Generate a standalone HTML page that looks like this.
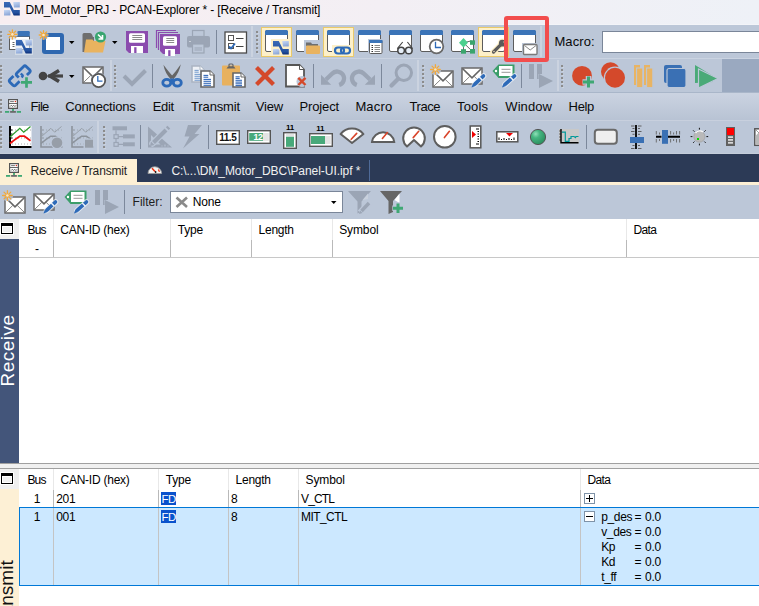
<!DOCTYPE html>
<html><head><meta charset="utf-8">
<style>
*{margin:0;padding:0;box-sizing:border-box}
html,body{width:759px;height:606px;overflow:hidden;background:#fff;font-family:"Liberation Sans",sans-serif;font-size:12px;color:#000}
.a{position:absolute}
svg{position:absolute;overflow:visible}
.t{position:absolute;white-space:pre;line-height:1}
</style></head><body>
<div class="a" style="left:0px;top:0px;width:759px;height:25px;background:linear-gradient(90deg,#f8eef1 0%,#f3eff4 50%,#eef1f7 100%);"></div>
<div class="a" style="left:0px;top:24px;width:759px;height:1px;background:#f3f4f8;"></div>
<div class="a" style="left:0px;top:25px;width:759px;height:67px;background:#bcc7d8;"></div>
<div class="a" style="left:0px;top:58px;width:759px;height:1px;background:#cad3e1;"></div>
<div class="a" style="left:722px;top:59px;width:37px;height:33px;background:#9aa9c0;"></div>
<div class="a" style="left:0px;top:92px;width:759px;height:1px;background:#a9b6c9;"></div>
<div class="a" style="left:0px;top:93px;width:759px;height:27px;background:linear-gradient(180deg,#cbd3e1,#b8c3d4);"></div>
<div class="a" style="left:0px;top:120px;width:759px;height:1px;background:#c8d0de;"></div>
<div class="a" style="left:0px;top:121px;width:759px;height:32px;background:#bcc7d8;"></div>
<div class="a" style="left:0px;top:153px;width:759px;height:1px;background:#c4cdda;"></div>
<div class="a" style="left:0px;top:154px;width:759px;height:28px;background:#2c3a56;"></div>
<div class="a" style="left:0px;top:159px;width:137px;height:26px;background:#fdf0d5;"></div>
<div class="a" style="left:0px;top:182px;width:759px;height:3px;background:#fdf0d5;"></div>
<div class="a" style="left:369px;top:160px;width:1px;height:21px;background:#4f6a98;"></div>
<div class="a" style="left:0px;top:185px;width:759px;height:34px;background:#bcc7d8;"></div>
<div class="a" style="left:0px;top:219px;width:19px;height:20px;background:#efefef;"></div>
<div class="a" style="left:0px;top:239px;width:19px;height:224px;background:#43557a;"></div>
<div class="a" style="left:19px;top:257px;width:740px;height:1px;background:#c8c8c8;"></div>
<div class="a" style="left:53px;top:219px;width:1px;height:21px;background:#e8e8e8;"></div>
<div class="a" style="left:53px;top:240px;width:1px;height:17px;background:#b9b9b9;"></div>
<div class="a" style="left:170px;top:219px;width:1px;height:21px;background:#e8e8e8;"></div>
<div class="a" style="left:170px;top:240px;width:1px;height:17px;background:#b9b9b9;"></div>
<div class="a" style="left:251px;top:219px;width:1px;height:21px;background:#e8e8e8;"></div>
<div class="a" style="left:251px;top:240px;width:1px;height:17px;background:#b9b9b9;"></div>
<div class="a" style="left:332px;top:219px;width:1px;height:21px;background:#e8e8e8;"></div>
<div class="a" style="left:332px;top:240px;width:1px;height:17px;background:#b9b9b9;"></div>
<div class="a" style="left:626px;top:219px;width:1px;height:21px;background:#e8e8e8;"></div>
<div class="a" style="left:626px;top:240px;width:1px;height:17px;background:#b9b9b9;"></div>
<div class="a" style="left:0px;top:463px;width:759px;height:1px;background:#a0a0a0;"></div>
<div class="a" style="left:0px;top:464px;width:759px;height:4px;background:#f0f0f0;"></div>
<div class="a" style="left:0px;top:468px;width:759px;height:1px;background:#a0a0a0;"></div>
<div class="a" style="left:0px;top:469px;width:19px;height:20px;background:#efefef;"></div>
<div class="a" style="left:0px;top:489px;width:19px;height:117px;background:#fdf0d5;"></div>
<div class="a" style="left:19px;top:507px;width:740px;height:79px;background:#cce8ff;border-top:1px solid #0078d7;border-bottom:1px solid #0078d7;border-left:1px solid #0078d7"></div>
<div class="a" style="left:53px;top:469px;width:1px;height:21px;background:#e8e8e8;"></div>
<div class="a" style="left:53px;top:490px;width:1px;height:17px;background:#b9b9b9;"></div>
<div class="a" style="left:53px;top:508px;width:1px;height:77px;background:#c4c4c4;"></div>
<div class="a" style="left:158px;top:469px;width:1px;height:21px;background:#e8e8e8;"></div>
<div class="a" style="left:158px;top:490px;width:1px;height:17px;background:#b9b9b9;"></div>
<div class="a" style="left:158px;top:508px;width:1px;height:77px;background:#c4c4c4;"></div>
<div class="a" style="left:228px;top:469px;width:1px;height:21px;background:#e8e8e8;"></div>
<div class="a" style="left:228px;top:490px;width:1px;height:17px;background:#b9b9b9;"></div>
<div class="a" style="left:228px;top:508px;width:1px;height:77px;background:#c4c4c4;"></div>
<div class="a" style="left:298px;top:469px;width:1px;height:21px;background:#e8e8e8;"></div>
<div class="a" style="left:298px;top:490px;width:1px;height:17px;background:#b9b9b9;"></div>
<div class="a" style="left:298px;top:508px;width:1px;height:77px;background:#c4c4c4;"></div>
<div class="a" style="left:580px;top:469px;width:1px;height:21px;background:#e8e8e8;"></div>
<div class="a" style="left:580px;top:490px;width:1px;height:17px;background:#b9b9b9;"></div>
<div class="a" style="left:580px;top:508px;width:1px;height:77px;background:#c4c4c4;"></div>
<div class="a" style="left:161px;top:492px;width:15px;height:13px;background:#0a52cc;"></div>
<div class="a" style="left:161px;top:510px;width:15px;height:13px;background:#0a52cc;"></div>
<div class="a" style="left:1px;top:223px;width:12px;height:11px;border:1px solid #000;border-top-width:3px;background:#efefef;box-shadow:0 0 0 1px #fff, inset 0 0 0 1px #fff"></div>
<div class="a" style="left:1px;top:473px;width:12px;height:11px;border:1px solid #000;border-top-width:3px;background:#efefef;box-shadow:0 0 0 1px #fff, inset 0 0 0 1px #fff"></div>
<div class="a" style="left:584px;top:493px;width:11px;height:11px;border:1px solid #7f93a8;background:#fff"></div>
<div class="a" style="left:586px;top:498px;width:7px;height:1px;background:#000;"></div>
<div class="a" style="left:589px;top:495px;width:1px;height:7px;background:#000;"></div>
<div class="a" style="left:584px;top:511px;width:11px;height:11px;border:1px solid #7f93a8;background:#fff"></div>
<div class="a" style="left:586px;top:516px;width:7px;height:1px;background:#000;"></div>
<div class="t" style="left:-29.5px;top:341px;width:72px;height:19px;font-size:19px;letter-spacing:0.5px;color:#fff;transform:rotate(-90deg);text-align:center">Receive</div>
<div class="t" style="left:-31px;top:587px;width:74px;height:19px;font-size:19px;color:#111;transform:rotate(-90deg)">Transmit</div>
<svg style="left:4px;top:2px" width="16.0" height="13.6" viewBox="0 0 16 13.6"><defs><linearGradient id="lb" x1="0" y1="0" x2="0.3" y2="1"><stop offset="0" stop-color="#c9daf6"/><stop offset="1" stop-color="#8ea8d8"/></linearGradient><linearGradient id="db" x1="0" y1="0" x2="0" y2="1"><stop offset="0" stop-color="#3a6ab6"/><stop offset="0.8" stop-color="#22509e"/><stop offset="1" stop-color="#0c2f7a"/></linearGradient></defs><path d="M9.2 0H15.8V5.4H10Z" fill="url(#lb)"/><path d="M0 8H5.6L6.4 9.6V13.4H0Z" fill="url(#lb)"/><path d="M0 0H5.8L9.8 8H15.8V13.4H9.7L5.8 5.4H0Z" fill="url(#db)"/></svg>
<div class="a" style="left:0px;top:31px;width:2px;height:2px;background:#8c8c8c;"></div>
<div class="a" style="left:1px;top:33px;width:2px;height:1px;background:#d6dbe3;opacity:.6"></div>
<div class="a" style="left:0px;top:35px;width:2px;height:2px;background:#8c8c8c;"></div>
<div class="a" style="left:1px;top:37px;width:2px;height:1px;background:#d6dbe3;opacity:.6"></div>
<div class="a" style="left:0px;top:39px;width:2px;height:2px;background:#8c8c8c;"></div>
<div class="a" style="left:1px;top:41px;width:2px;height:1px;background:#d6dbe3;opacity:.6"></div>
<div class="a" style="left:0px;top:43px;width:2px;height:2px;background:#8c8c8c;"></div>
<div class="a" style="left:1px;top:45px;width:2px;height:1px;background:#d6dbe3;opacity:.6"></div>
<div class="a" style="left:0px;top:47px;width:2px;height:2px;background:#8c8c8c;"></div>
<div class="a" style="left:1px;top:49px;width:2px;height:1px;background:#d6dbe3;opacity:.6"></div>
<div class="a" style="left:0px;top:51px;width:2px;height:2px;background:#8c8c8c;"></div>
<div class="a" style="left:1px;top:53px;width:2px;height:1px;background:#d6dbe3;opacity:.6"></div>
<svg style="left:5px;top:27px" width="30" height="30" viewBox="0 0 30 30"><rect x="4.5" y="9.5" width="20" height="13" fill="#fff" stroke="#5c5c5c" stroke-width="1"/><path d="M12.4 9.5V5.2Q12.4 4 13.6 4H23.6Q24.8 4 24.8 5.2V9.5Z" fill="#3b74b8"/><path d="M7.5 15.5h2M7.5 17.5h2M7.5 19.5h2" stroke="#666" stroke-width="1"/><rect x="10" y="12" width="18" height="16" fill="#bcc7d8" opacity="0"/></svg>
<div class="a" style="left:15px;top:39px;width:18px;height:16px;background:#dfe6ef;opacity:.6"></div>
<svg style="left:16px;top:40px" width="16.0" height="13.6" viewBox="0 0 16 13.6"><defs><linearGradient id="lb" x1="0" y1="0" x2="0.3" y2="1"><stop offset="0" stop-color="#c9daf6"/><stop offset="1" stop-color="#8ea8d8"/></linearGradient><linearGradient id="db" x1="0" y1="0" x2="0" y2="1"><stop offset="0" stop-color="#3a6ab6"/><stop offset="0.8" stop-color="#22509e"/><stop offset="1" stop-color="#0c2f7a"/></linearGradient></defs><path d="M9.2 0H15.8V5.4H10Z" fill="url(#lb)"/><path d="M0 8H5.6L6.4 9.6V13.4H0Z" fill="url(#lb)"/><path d="M0 0H5.8L9.8 8H15.8V13.4H9.7L5.8 5.4H0Z" fill="url(#db)"/></svg>
<svg style="left:5px;top:27px" width="16" height="16"><circle cx="7.4" cy="7.4" r="5.3999999999999995" fill="#bcc7d8" opacity=".55"/><path d="M2.80 7.40L12.00 7.40M4.15 4.15L10.65 10.65M7.40 2.80L7.40 12.00M10.65 4.15L4.15 10.65" stroke="#f2a93b" stroke-width="1.3" stroke-linecap="round"/><circle cx="7.4" cy="7.4" r="1.3" fill="#f4e6cc"/></svg>
<svg style="left:42px;top:33px" width="22" height="21" viewBox="0 0 22 21"><rect x="2" y="2" width="18" height="17" fill="#fff" stroke="#2f68b0" stroke-width="4" rx="1"/></svg>
<svg style="left:37px;top:29px" width="14" height="14"><circle cx="6.5" cy="6" r="5.1" fill="#bcc7d8" opacity=".55"/><path d="M2.20 6.00L10.80 6.00M3.46 2.96L9.54 9.04M6.50 1.70L6.50 10.30M9.54 2.96L3.46 9.04" stroke="#f2a93b" stroke-width="1.3" stroke-linecap="round"/><circle cx="6.5" cy="6" r="1.3" fill="#f4e6cc"/></svg>
<svg style="left:69px;top:41px" width="6" height="3" viewBox="0 0 6 3"><path d="M0 0H5.5L2.75 3Z" fill="#000"/></svg>
<svg style="left:81px;top:31px" width="26" height="23" viewBox="0 0 26 23"><path d="M1.5 3.5Q1.5 2 3 2H9Q10.5 2 11 3.5L12 6H13V21H1.5Z" fill="#6e6e6e"/><path d="M3 21.5L5 8.5H11.5L12.8 10H24.5L22 21.5Z" fill="#e9b35f"/><circle cx="19.5" cy="6" r="5.6" fill="#39a56f"/><path d="M17 3.5L21 7.5M21.5 4V8H17.5" stroke="#fff" stroke-width="1.6" fill="none"/></svg>
<svg style="left:112px;top:41px" width="6" height="3" viewBox="0 0 6 3"><path d="M0 0H5.5L2.75 3Z" fill="#000"/></svg>
<svg style="left:126px;top:31px" width="22" height="22" viewBox="0 0 22 22"><path d="M0 0H22V22H3L0 19Z" fill="#8b4cae"/><rect x="3" y="2.3" width="16" height="9.5" rx="1.5" fill="#fff"/><path d="M6.3 4.5H16.2M6.3 6.5H16.2M6.3 8.5H16.2" stroke="#8a8a8a" stroke-width="1"/><rect x="5" y="15" width="12" height="7" fill="#fff"/><rect x="8.2" y="16.2" width="2.3" height="5.8" fill="#8b4cae"/></svg>
<svg style="left:155px;top:29px" width="25" height="25" viewBox="0 0 25 25"><path d="M1.5 19V1.5H21M3.5 21V3.5H23" fill="none" stroke="#8b4cae" stroke-width="1.2"/></svg>
<svg style="left:160px;top:34px" width="20" height="20" viewBox="0 0 20 20"><path d="M0 0H20V20H3L0 17Z" fill="#8b4cae"/><rect x="3" y="2.3" width="14" height="9.5" rx="1.5" fill="#fff"/><path d="M6.3 4.5H14.2M6.3 6.5H14.2M6.3 8.5H14.2" stroke="#8a8a8a" stroke-width="1"/><rect x="5" y="15" width="10" height="7" fill="#fff"/><rect x="8.2" y="16.2" width="2.3" height="5.8" fill="#8b4cae"/></svg>
<svg style="left:186px;top:30px" width="25" height="24" viewBox="0 0 25 24"><rect x="6.5" y="0.5" width="11.5" height="6" fill="none" stroke="#9ba5b5" stroke-width="1.2"/><rect x="1" y="6" width="23" height="11.5" rx="2" fill="#9ba5b5"/><rect x="6.5" y="14" width="11.5" height="9" fill="#bcc7d8" stroke="#9ba5b5" stroke-width="1.2"/><path d="M8.5 18H16M8.5 20H16" stroke="#9ba5b5" stroke-width="1"/><rect x="3" y="11" width="2" height="1" fill="#c9d0da"/></svg>
<div class="a" style="left:216px;top:30px;width:1px;height:24px;background:#7c889b;"></div>
<svg style="left:224px;top:31px" width="24" height="23" viewBox="0 0 24 23"><rect x="1" y="1" width="21.5" height="21" fill="#fff" stroke="#4a4a4a" stroke-width="1.3"/><rect x="4.5" y="4.5" width="5" height="5" fill="none" stroke="#555" stroke-width="1"/><rect x="4.5" y="12.5" width="5" height="5" fill="none" stroke="#555" stroke-width="1"/><path d="M12 7.5H19.5M12 15.5H19.5" stroke="#444" stroke-width="1.1"/><path d="M5 15.5L7 17.5L11 12.5" stroke="#2d6ab8" stroke-width="1.8" fill="none"/></svg>
<div class="a" style="left:251px;top:26px;width:2px;height:31px;background:#cbd3e0;"></div>
<div class="a" style="left:256px;top:31px;width:2px;height:2px;background:#8c8c8c;"></div>
<div class="a" style="left:257px;top:33px;width:2px;height:1px;background:#d6dbe3;opacity:.6"></div>
<div class="a" style="left:256px;top:35px;width:2px;height:2px;background:#8c8c8c;"></div>
<div class="a" style="left:257px;top:37px;width:2px;height:1px;background:#d6dbe3;opacity:.6"></div>
<div class="a" style="left:256px;top:39px;width:2px;height:2px;background:#8c8c8c;"></div>
<div class="a" style="left:257px;top:41px;width:2px;height:1px;background:#d6dbe3;opacity:.6"></div>
<div class="a" style="left:256px;top:43px;width:2px;height:2px;background:#8c8c8c;"></div>
<div class="a" style="left:257px;top:45px;width:2px;height:1px;background:#d6dbe3;opacity:.6"></div>
<div class="a" style="left:256px;top:47px;width:2px;height:2px;background:#8c8c8c;"></div>
<div class="a" style="left:257px;top:49px;width:2px;height:1px;background:#d6dbe3;opacity:.6"></div>
<div class="a" style="left:256px;top:51px;width:2px;height:2px;background:#8c8c8c;"></div>
<div class="a" style="left:257px;top:53px;width:2px;height:1px;background:#d6dbe3;opacity:.6"></div>
<div class="a" style="left:261px;top:27px;width:31px;height:30px;background:#fdf0c9;border:1px solid #e9c96a"></div>
<div class="a" style="left:323px;top:27px;width:31px;height:30px;background:#fdf0c9;border:1px solid #e9c96a"></div>
<div class="a" style="left:478px;top:27px;width:31px;height:30px;background:#fdf0c9;border:1px solid #e9c96a"></div>
<svg style="left:264px;top:29px" width="25" height="24" viewBox="0 0 25 24"><rect x="1.5" y="1.5" width="22" height="21" rx="1.5" fill="#fff" stroke="#5c5c5c" stroke-width="1"/><path d="M1 6 V2.5 Q1 1 2.5 1 H22.5 Q24 1 24 2.5 V6 Z" fill="#3b74b8"/></svg>
<div class="a" style="left:271px;top:39px;width:19px;height:15px;background:#fdf0c9;"></div>
<svg style="left:273px;top:40.5px" width="16.0" height="13.6" viewBox="0 0 16 13.6"><defs><linearGradient id="lb" x1="0" y1="0" x2="0.3" y2="1"><stop offset="0" stop-color="#c9daf6"/><stop offset="1" stop-color="#8ea8d8"/></linearGradient><linearGradient id="db" x1="0" y1="0" x2="0" y2="1"><stop offset="0" stop-color="#3a6ab6"/><stop offset="0.8" stop-color="#22509e"/><stop offset="1" stop-color="#0c2f7a"/></linearGradient></defs><path d="M9.2 0H15.8V5.4H10Z" fill="url(#lb)"/><path d="M0 8H5.6L6.4 9.6V13.4H0Z" fill="url(#lb)"/><path d="M0 0H5.8L9.8 8H15.8V13.4H9.7L5.8 5.4H0Z" fill="url(#db)"/></svg>
<svg style="left:295px;top:29px" width="25" height="24" viewBox="0 0 25 24"><rect x="1.5" y="1.5" width="22" height="21" rx="1.5" fill="#fff" stroke="#5c5c5c" stroke-width="1"/><path d="M1 6 V2.5 Q1 1 2.5 1 H22.5 Q24 1 24 2.5 V6 Z" fill="#3b74b8"/></svg>
<svg style="left:304px;top:40px" width="17" height="14" viewBox="0 0 17 14"><rect x="0" y="0" width="17" height="14" fill="#bcc7d8"/><path d="M2 2.5H7L8 4H14V6H2Z" fill="#6e6e6e"/><rect x="2" y="5.5" width="14" height="8.5" rx="1" fill="#e9b35f"/></svg>
<svg style="left:326px;top:29px" width="25" height="24" viewBox="0 0 25 24"><rect x="1.5" y="1.5" width="22" height="21" rx="1.5" fill="#fff" stroke="#5c5c5c" stroke-width="1"/><path d="M1 6 V2.5 Q1 1 2.5 1 H22.5 Q24 1 24 2.5 V6 Z" fill="#3b74b8"/></svg>
<svg style="left:332px;top:45px" width="21" height="10" viewBox="0 0 21 10"><rect x="0" y="0" width="21" height="10" fill="#fdf0c9"/><rect x="3" y="2.5" width="9" height="6" rx="3" fill="none" stroke="#2d6ab8" stroke-width="2.2"/><rect x="9" y="2.5" width="9" height="6" rx="3" fill="none" stroke="#2d6ab8" stroke-width="2.2"/></svg>
<svg style="left:357px;top:29px" width="25" height="24" viewBox="0 0 25 24"><rect x="1.5" y="1.5" width="22" height="21" rx="1.5" fill="#fff" stroke="#5c5c5c" stroke-width="1"/><path d="M1 6 V2.5 Q1 1 2.5 1 H22.5 Q24 1 24 2.5 V6 Z" fill="#3b74b8"/></svg>
<svg style="left:368px;top:39px" width="15" height="16" viewBox="0 0 15 16"><rect x="0" y="0" width="15" height="16" fill="#bcc7d8"/><rect x="1.5" y="1.5" width="12.5" height="13" rx="1" fill="#fff" stroke="#5c5c5c" stroke-width="1"/><rect x="1" y="1" width="13.5" height="3" fill="#3b74b8"/><path d="M3.5 6.5h1.5M3.5 8.5h1.5M3.5 10.5h1.5M3.5 12.5h1.5" stroke="#333" stroke-width="1"/><path d="M6.5 6.5h5.5M6.5 8.5h5.5M6.5 10.5h5.5M6.5 12.5h5.5" stroke="#888" stroke-width="1"/></svg>
<svg style="left:388px;top:29px" width="25" height="24" viewBox="0 0 25 24"><rect x="1.5" y="1.5" width="22" height="21" rx="1.5" fill="#fff" stroke="#5c5c5c" stroke-width="1"/><path d="M1 6 V2.5 Q1 1 2.5 1 H22.5 Q24 1 24 2.5 V6 Z" fill="#3b74b8"/></svg>
<svg style="left:394px;top:40px" width="20" height="16" viewBox="0 0 20 16"><path d="M8.7 2L3.3 8.6M13.4 2L18.6 8.6" stroke="#444" stroke-width="1.1" fill="none"/><circle cx="7.1" cy="10.5" r="3.3" fill="#e6eef8" stroke="#444" stroke-width="1.5"/><circle cx="14.8" cy="10.5" r="3.3" fill="#e6eef8" stroke="#444" stroke-width="1.5"/><path d="M10.3 10.2H11.6" stroke="#444" stroke-width="1.4"/></svg>
<svg style="left:419px;top:29px" width="25" height="24" viewBox="0 0 25 24"><rect x="1.5" y="1.5" width="22" height="21" rx="1.5" fill="#fff" stroke="#5c5c5c" stroke-width="1"/><path d="M1 6 V2.5 Q1 1 2.5 1 H22.5 Q24 1 24 2.5 V6 Z" fill="#3b74b8"/></svg>
<svg style="left:428px;top:38px" width="17" height="17" viewBox="0 0 17 17"><circle cx="8.5" cy="8.5" r="6.8" fill="#fff" stroke="#6a6a6a" stroke-width="1.8"/><path d="M7.5 3.8V9.5H13" stroke="#2d6ab8" stroke-width="1.3" fill="none"/></svg>
<svg style="left:450px;top:29px" width="25" height="24" viewBox="0 0 25 24"><rect x="1.5" y="1.5" width="22" height="21" rx="1.5" fill="#fff" stroke="#5c5c5c" stroke-width="1"/><path d="M1 6 V2.5 Q1 1 2.5 1 H22.5 Q24 1 24 2.5 V6 Z" fill="#3b74b8"/></svg>
<svg style="left:457px;top:36px" width="20" height="19" viewBox="0 0 20 19"><rect x="4" y="3" width="16" height="16" fill="#bcc7d8" opacity="0"/><path d="M6.5 6.8L14.5 4.8M6.5 6.8L15 15M6.5 6.8L6.5 15" stroke="#555" stroke-width="0.9"/><path d="M6.5 2L11 6.8L6.5 11.5L2 6.8Z" fill="#4bd08e"/><rect x="13" y="4.3" width="5" height="4.5" fill="#3aa56d"/><rect x="4" y="13.2" width="5" height="4.5" fill="#3aa56d"/><rect x="13" y="13" width="5" height="4.6" fill="#3aa56d"/></svg>
<svg style="left:481px;top:29px" width="25" height="24" viewBox="0 0 25 24"><rect x="1.5" y="1.5" width="22" height="21" rx="1.5" fill="#fff" stroke="#5c5c5c" stroke-width="1"/><path d="M1 6 V2.5 Q1 1 2.5 1 H22.5 Q24 1 24 2.5 V6 Z" fill="#3b74b8"/></svg>
<svg style="left:489px;top:38px" width="18" height="17" viewBox="0 0 18 17"><path d="M4 14.5L12 6.5" stroke="#fdf0c9" stroke-width="6" stroke-linecap="round"/><circle cx="13.5" cy="5" r="4.6" fill="#fdf0c9"/><path d="M4.5 14L11.8 6.7" stroke="#5a5a5a" stroke-width="3.2" stroke-linecap="round"/><circle cx="13.3" cy="5.2" r="3.4" fill="#5a5a5a"/><path d="M13.8 4.6L16.5 1.5L18 3.5Z" fill="#fdf0c9"/><circle cx="5" cy="13.5" r=".7" fill="#fdf0c9"/></svg>
<svg style="left:512px;top:29px" width="25" height="24" viewBox="0 0 25 24"><rect x="1.5" y="1.5" width="22" height="21" rx="1.5" fill="#fff" stroke="#5c5c5c" stroke-width="1"/><path d="M1 6 V2.5 Q1 1 2.5 1 H22.5 Q24 1 24 2.5 V6 Z" fill="#3b74b8"/></svg>
<svg style="left:522px;top:43px" width="16" height="12" viewBox="0 0 16 12"><rect x="0" y="0" width="16" height="12" fill="#bcc7d8"/><rect x="1.5" y="1.5" width="13.5" height="10" rx="1" fill="#fff" stroke="#7a7a7a" stroke-width="1.4"/><path d="M2.5 2.5L8.2 7L14 2.5" fill="none" stroke="#888" stroke-width="1"/></svg>
<div class="a" style="left:540px;top:26px;width:2px;height:31px;background:#cbd3e0;"></div>
<div class="a" style="left:0px;top:65px;width:2px;height:2px;background:#8c8c8c;"></div>
<div class="a" style="left:1px;top:67px;width:2px;height:1px;background:#d6dbe3;opacity:.6"></div>
<div class="a" style="left:0px;top:69px;width:2px;height:2px;background:#8c8c8c;"></div>
<div class="a" style="left:1px;top:71px;width:2px;height:1px;background:#d6dbe3;opacity:.6"></div>
<div class="a" style="left:0px;top:73px;width:2px;height:2px;background:#8c8c8c;"></div>
<div class="a" style="left:1px;top:75px;width:2px;height:1px;background:#d6dbe3;opacity:.6"></div>
<div class="a" style="left:0px;top:77px;width:2px;height:2px;background:#8c8c8c;"></div>
<div class="a" style="left:1px;top:79px;width:2px;height:1px;background:#d6dbe3;opacity:.6"></div>
<div class="a" style="left:0px;top:81px;width:2px;height:2px;background:#8c8c8c;"></div>
<div class="a" style="left:1px;top:83px;width:2px;height:1px;background:#d6dbe3;opacity:.6"></div>
<div class="a" style="left:0px;top:85px;width:2px;height:2px;background:#8c8c8c;"></div>
<div class="a" style="left:1px;top:87px;width:2px;height:1px;background:#d6dbe3;opacity:.6"></div>
<svg style="left:5px;top:62px" width="30" height="28" viewBox="0 0 30 28"><path d="M13.8 15.6L11.9 13.7Q10.6 12.4 11.9 11.1L18.6 4.4Q19.9 3.1 21.2 4.4L24.6 7.8Q25.9 9.1 24.6 10.4L21.9 13.1" fill="none" stroke="#2d6ab8" stroke-width="2.8"/><path d="M15.8 11.5L17.4 13.1Q18.1 13.8 17.4 14.5L16.6 15.5" fill="none" stroke="#2d6ab8" stroke-width="2.4"/><path d="M8.5 14L4.9 17.6Q3.6 18.9 4.9 20.2L8 23.3Q9.3 24.6 10.6 23.3L14.6 19.3" fill="none" stroke="#2d6ab8" stroke-width="2.8"/><path d="M21.5 15.3V25.7M16 20.4H27" stroke="#bcc7d8" stroke-width="4.6"/><path d="M21.5 15.3V25.7M16 20.4H27" stroke="#3fa874" stroke-width="2.7"/></svg>
<svg style="left:38px;top:69px" width="26" height="15" viewBox="0 0 26 15"><circle cx="5" cy="7" r="4.3" fill="#444"/><path d="M21 1.5L12 7L21 12.5" fill="none" stroke="#444" stroke-width="3.6"/><path d="M10 7H25" stroke="#444" stroke-width="3.2"/></svg>
<svg style="left:69px;top:75px" width="6" height="3" viewBox="0 0 6 3"><path d="M0 0H5.5L2.75 3Z" fill="#000"/></svg>
<svg style="left:82px;top:66px" width="22" height="18" viewBox="0 0 22 18"><rect x="1" y="1" width="20" height="16" fill="#fff" stroke="#6a6a6a" stroke-width="1.5"/><path d="M1.5 1.5L11.0 10.799999999999999L20.5 1.5" fill="none" stroke="#666" stroke-width="1.6"/><path d="M2 16L8.8 9.36M20 16L13.2 9.36" stroke="#777" stroke-width="0.9"/></svg>
<svg style="left:90px;top:72px" width="17" height="17" viewBox="0 0 17 17"><circle cx="8.6" cy="8.5" r="7.8" fill="#bcc7d8"/><circle cx="8.6" cy="8.5" r="6.6" fill="#fff" stroke="#555" stroke-width="1.8"/><path d="M7.8 4V9.2H12.5" stroke="#2d6ab8" stroke-width="1.3" fill="none"/></svg>
<div class="a" style="left:110px;top:60px;width:2px;height:31px;background:#cbd3e0;"></div>
<div class="a" style="left:114px;top:65px;width:2px;height:2px;background:#8c8c8c;"></div>
<div class="a" style="left:115px;top:67px;width:2px;height:1px;background:#d6dbe3;opacity:.6"></div>
<div class="a" style="left:114px;top:69px;width:2px;height:2px;background:#8c8c8c;"></div>
<div class="a" style="left:115px;top:71px;width:2px;height:1px;background:#d6dbe3;opacity:.6"></div>
<div class="a" style="left:114px;top:73px;width:2px;height:2px;background:#8c8c8c;"></div>
<div class="a" style="left:115px;top:75px;width:2px;height:1px;background:#d6dbe3;opacity:.6"></div>
<div class="a" style="left:114px;top:77px;width:2px;height:2px;background:#8c8c8c;"></div>
<div class="a" style="left:115px;top:79px;width:2px;height:1px;background:#d6dbe3;opacity:.6"></div>
<div class="a" style="left:114px;top:81px;width:2px;height:2px;background:#8c8c8c;"></div>
<div class="a" style="left:115px;top:83px;width:2px;height:1px;background:#d6dbe3;opacity:.6"></div>
<div class="a" style="left:114px;top:85px;width:2px;height:2px;background:#8c8c8c;"></div>
<div class="a" style="left:115px;top:87px;width:2px;height:1px;background:#d6dbe3;opacity:.6"></div>
<svg style="left:122px;top:68px" width="25" height="18" viewBox="0 0 25 18"><path d="M2 8L10 16L23.5 2.5" fill="none" stroke="#9ba5b5" stroke-width="4"/></svg>
<div class="a" style="left:152px;top:64px;width:1px;height:24px;background:#7c889b;"></div>
<svg style="left:160px;top:63px" width="24" height="25" viewBox="0 0 24 25"><path d="M3.4 1.8Q5 10.5 10.8 16.2L13.6 14.2Q7.5 7.5 3.4 1.8Z" fill="#666"/><path d="M20.8 1.2Q19.2 10 13.4 16.2L10.6 14.2Q16.7 7.5 20.8 1.2Z" fill="#666"/><ellipse cx="6.8" cy="19.7" rx="4" ry="3.4" fill="none" stroke="#2d6ab8" stroke-width="2.8"/><ellipse cx="17.3" cy="19.7" rx="4" ry="3.4" fill="none" stroke="#2d6ab8" stroke-width="2.8"/><path d="M10.2 15.5H14L13.2 21H11Z" fill="#2d6ab8"/></svg>
<svg style="left:191px;top:65px" width="14" height="18" viewBox="0 0 14 18"><path d="M1 1H9L13 5V17H1Z" fill="#eef1f6" stroke="#aab4c2" stroke-width="1.6"/><path d="M9 1V5H13" fill="#fff" stroke="#aab4c2" stroke-width="1"/><path d="M3.5 5.4H7.7" stroke="#7aa0d0" stroke-width="1.1"/><path d="M3.5 7.2H7.7" stroke="#7aa0d0" stroke-width="1.1"/><path d="M3.5 9.4H10.0" stroke="#7aa0d0" stroke-width="1.1"/><path d="M3.5 11.3H10.0" stroke="#7aa0d0" stroke-width="1.1"/><path d="M3.5 13.3H10.0" stroke="#7aa0d0" stroke-width="1.1"/><path d="M3.5 15.3H10.0" stroke="#7aa0d0" stroke-width="1.1"/></svg>
<svg style="left:200px;top:70px" width="15" height="18" viewBox="0 0 15 18"><path d="M1 1H10L14 5V17H1Z" fill="#fff" stroke="#666" stroke-width="1.6"/><path d="M10 1V5H14" fill="#fff" stroke="#666" stroke-width="1"/><path d="M3.5 5.4H8.2" stroke="#3469b8" stroke-width="1.1"/><path d="M3.5 7.2H8.2" stroke="#3469b8" stroke-width="1.1"/><path d="M3.5 9.4H11.0" stroke="#3469b8" stroke-width="1.1"/><path d="M3.5 11.3H11.0" stroke="#3469b8" stroke-width="1.1"/><path d="M3.5 13.3H11.0" stroke="#3469b8" stroke-width="1.1"/><path d="M3.5 15.3H11.0" stroke="#3469b8" stroke-width="1.1"/></svg>
<svg style="left:221px;top:64px" width="20" height="22" viewBox="0 0 20 22"><rect x="1" y="1.5" width="18" height="20" rx="1" fill="#e8b15e"/><path d="M5.5 4.5H14.5L13 2.5H7Z" fill="#666"/><rect x="8" y="0" width="4" height="3" rx="1" fill="none" stroke="#666" stroke-width="1.2"/></svg>
<svg style="left:232px;top:72px" width="14" height="16" viewBox="0 0 14 16"><path d="M1 1H9L13 5V15H1Z" fill="#fff" stroke="#666" stroke-width="1.6"/><path d="M9 1V5H13" fill="#fff" stroke="#666" stroke-width="1"/><path d="M3.5 4.8H7.7" stroke="#3469b8" stroke-width="1.1"/><path d="M3.5 6.4H7.7" stroke="#3469b8" stroke-width="1.1"/><path d="M3.5 8.3H10.0" stroke="#3469b8" stroke-width="1.1"/><path d="M3.5 10.1H10.0" stroke="#3469b8" stroke-width="1.1"/><path d="M3.5 11.8H10.0" stroke="#3469b8" stroke-width="1.1"/><path d="M3.5 13.6H10.0" stroke="#3469b8" stroke-width="1.1"/></svg>
<svg style="left:254px;top:65px" width="22" height="22" viewBox="0 0 22 22"><path d="M2.5 2.5L19.5 19.5M19.5 2.5L2.5 19.5" stroke="#d4492b" stroke-width="4.2"/></svg>
<svg style="left:284px;top:63px" width="24" height="25" viewBox="0 0 24 25"><path d="M2 2H15.5L20 6.5V23.5H2Z" fill="#fff" stroke="#555" stroke-width="1.8"/><path d="M15.5 2V6.5H20" fill="#fff" stroke="#555" stroke-width="1"/><circle cx="18" cy="18.5" r="5.5" fill="#bcc7d8"/><path d="M14.3 14.8L21.5 22M21.5 14.8L14.3 22" stroke="#d4492b" stroke-width="2.4"/></svg>
<div class="a" style="left:313px;top:64px;width:1px;height:24px;background:#7c889b;"></div>
<svg style="left:318px;top:64px" width="30" height="26" viewBox="0 0 30 26"><path d="M8 15.5L14 9.8A6.9 6.9 0 1 1 21.2 21" fill="none" stroke="#9ba5b5" stroke-width="4.3"/><path d="M3 10.7V20.8H13.2Z" fill="#9ba5b5"/></svg>
<svg style="left:349px;top:64px" width="30" height="26" viewBox="0 0 30 26"><path d="M21 15.5L15 9.8A6.9 6.9 0 1 0 7.8 21" fill="none" stroke="#9ba5b5" stroke-width="4.3"/><path d="M26 10.7V20.8H15.8Z" fill="#9ba5b5"/></svg>
<div class="a" style="left:381px;top:64px;width:1px;height:24px;background:#7c889b;"></div>
<svg style="left:388px;top:63px" width="26" height="26" viewBox="0 0 26 26"><circle cx="15.8" cy="9.8" r="7.7" fill="none" stroke="#9ba5b5" stroke-width="3"/><path d="M10 16L3.5 22.5" stroke="#9ba5b5" stroke-width="4.2" stroke-linecap="round"/></svg>
<div class="a" style="left:417px;top:60px;width:2px;height:31px;background:#cbd3e0;"></div>
<div class="a" style="left:422px;top:65px;width:2px;height:2px;background:#8c8c8c;"></div>
<div class="a" style="left:423px;top:67px;width:2px;height:1px;background:#d6dbe3;opacity:.6"></div>
<div class="a" style="left:422px;top:69px;width:2px;height:2px;background:#8c8c8c;"></div>
<div class="a" style="left:423px;top:71px;width:2px;height:1px;background:#d6dbe3;opacity:.6"></div>
<div class="a" style="left:422px;top:73px;width:2px;height:2px;background:#8c8c8c;"></div>
<div class="a" style="left:423px;top:75px;width:2px;height:1px;background:#d6dbe3;opacity:.6"></div>
<div class="a" style="left:422px;top:77px;width:2px;height:2px;background:#8c8c8c;"></div>
<div class="a" style="left:423px;top:79px;width:2px;height:1px;background:#d6dbe3;opacity:.6"></div>
<div class="a" style="left:422px;top:81px;width:2px;height:2px;background:#8c8c8c;"></div>
<div class="a" style="left:423px;top:83px;width:2px;height:1px;background:#d6dbe3;opacity:.6"></div>
<div class="a" style="left:422px;top:85px;width:2px;height:2px;background:#8c8c8c;"></div>
<div class="a" style="left:423px;top:87px;width:2px;height:1px;background:#d6dbe3;opacity:.6"></div>
<svg style="left:432px;top:70px" width="22" height="18" viewBox="0 0 22 18"><rect x="1" y="1" width="20" height="16" fill="#fff" stroke="#6a6a6a" stroke-width="1.5"/><path d="M1.5 1.5L11.0 10.799999999999999L20.5 1.5" fill="none" stroke="#666" stroke-width="1.6"/><path d="M2 16L8.8 9.36M20 16L13.2 9.36" stroke="#777" stroke-width="0.9"/></svg>
<svg style="left:428px;top:63px" width="16" height="16"><circle cx="7.4" cy="6.5" r="5.8" fill="#bcc7d8" opacity=".6"/><circle cx="7.4" cy="6.5" r="5.6" fill="#bcc7d8" opacity=".55"/><path d="M2.60 6.50L12.20 6.50M4.01 3.11L10.79 9.89M7.40 1.70L7.40 11.30M10.79 3.11L4.01 9.89" stroke="#f2a93b" stroke-width="1.3" stroke-linecap="round"/><circle cx="7.4" cy="6.5" r="1.3" fill="#f4e6cc"/></svg>
<svg style="left:461px;top:67px" width="22" height="18" viewBox="0 0 22 18"><rect x="1" y="1" width="20" height="16" fill="#fff" stroke="#6a6a6a" stroke-width="1.5"/><path d="M1.5 1.5L11.0 10.799999999999999L20.5 1.5" fill="none" stroke="#666" stroke-width="1.6"/><path d="M2 16L8.8 9.36M20 16L13.2 9.36" stroke="#777" stroke-width="0.9"/></svg>
<svg style="left:469px;top:73px" width="18" height="16" viewBox="0 0 18 16"><line x1="5.5" y1="11.5" x2="14.5" y2="3" stroke="#eef2f8" stroke-width="5.6" stroke-linecap="round" opacity=".75"/><path d="M2.5 14.5L4.0 10.3L6.7 13.0Z" fill="#2d6ab8"/><line x1="6.1" y1="10.9" x2="14.5" y2="3" stroke="#2d6ab8" stroke-width="3.6" stroke-linecap="round"/><line x1="11.3" y1="6.2" x2="12.3" y2="5.2" stroke="#eef2f8" stroke-width="4.5"/></svg>
<svg style="left:492px;top:63.5px" width="23" height="15" viewBox="0 0 23 15"><path d="M0.5 7L6.5 0.5H22.5V14H6.5Z" fill="#3c9e6a"/><rect x="7" y="2" width="13.5" height="10" fill="#fff"/><circle cx="4" cy="7" r="1.2" fill="#fff"/><path d="M9.5 5.3H18.5M9.5 8.3H18.5" stroke="#999" stroke-width="1"/></svg>
<svg style="left:499px;top:72px" width="18" height="17" viewBox="0 0 18 17"><circle cx="9" cy="8" r="0" /><line x1="6" y1="12.5" x2="15.5" y2="4" stroke="#eef2f8" stroke-width="5.6" stroke-linecap="round" opacity=".75"/><path d="M3 15.5L4.5 11.3L7.2 14.0Z" fill="#2d6ab8"/><line x1="6.6" y1="11.9" x2="15.5" y2="4" stroke="#2d6ab8" stroke-width="3.6" stroke-linecap="round"/><line x1="12.3" y1="7.2" x2="13.3" y2="6.2" stroke="#eef2f8" stroke-width="4.5"/></svg>
<div class="a" style="left:521px;top:64px;width:1px;height:24px;background:#7c889b;"></div>
<svg style="left:529px;top:64px" width="25" height="25" viewBox="0 0 25 25"><rect x="0" y="0" width="5" height="15" fill="#9ba5b5"/><rect x="8" y="0" width="5" height="15" fill="#9ba5b5"/><path d="M9.5 10H13V10.5L24 17.5L10 24Z" fill="#bcc7d8"/><path d="M10 10L24 17L10 24Z" fill="#9ba5b5"/></svg>
<div class="a" style="left:557px;top:60px;width:2px;height:31px;background:#cbd3e0;"></div>
<div class="a" style="left:561px;top:65px;width:2px;height:2px;background:#8c8c8c;"></div>
<div class="a" style="left:562px;top:67px;width:2px;height:1px;background:#d6dbe3;opacity:.6"></div>
<div class="a" style="left:561px;top:69px;width:2px;height:2px;background:#8c8c8c;"></div>
<div class="a" style="left:562px;top:71px;width:2px;height:1px;background:#d6dbe3;opacity:.6"></div>
<div class="a" style="left:561px;top:73px;width:2px;height:2px;background:#8c8c8c;"></div>
<div class="a" style="left:562px;top:75px;width:2px;height:1px;background:#d6dbe3;opacity:.6"></div>
<div class="a" style="left:561px;top:77px;width:2px;height:2px;background:#8c8c8c;"></div>
<div class="a" style="left:562px;top:79px;width:2px;height:1px;background:#d6dbe3;opacity:.6"></div>
<div class="a" style="left:561px;top:81px;width:2px;height:2px;background:#8c8c8c;"></div>
<div class="a" style="left:562px;top:83px;width:2px;height:1px;background:#d6dbe3;opacity:.6"></div>
<div class="a" style="left:561px;top:85px;width:2px;height:2px;background:#8c8c8c;"></div>
<div class="a" style="left:562px;top:87px;width:2px;height:1px;background:#d6dbe3;opacity:.6"></div>
<svg style="left:571px;top:65px" width="26" height="24" viewBox="0 0 26 24"><circle cx="11" cy="10.8" r="9.9" fill="#d4492b"/><path d="M17.5 11V23M11.5 17H23.5" stroke="#bcc7d8" stroke-width="5.5"/><path d="M17.5 11.5V22.5M12 17H23" stroke="#3fa874" stroke-width="3"/></svg>
<svg style="left:600px;top:62px" width="26" height="27" viewBox="0 0 26 27"><circle cx="10.5" cy="9.8" r="9.5" fill="#d4492b"/><circle cx="15" cy="15.8" r="11.2" fill="#bcc7d8"/><circle cx="15" cy="15.8" r="10" fill="#d4492b"/></svg>
<svg style="left:633px;top:64px" width="22" height="25" viewBox="0 0 22 25"><rect x="1" y="1" width="6" height="20" fill="#e8b464"/><rect x="11" y="1" width="6" height="20" fill="#e8b464"/><rect x="3.6" y="4" width="6.2" height="19.6" fill="#e8b464" stroke="#bcc7d8" stroke-width="1"/><rect x="13.6" y="4" width="6.2" height="19.6" fill="#e8b464" stroke="#bcc7d8" stroke-width="1"/></svg>
<svg style="left:663px;top:64px" width="24" height="24" viewBox="0 0 24 24"><rect x="1" y="1" width="18" height="18" rx="2" fill="#3a70b4"/><rect x="4" y="4.5" width="19" height="19" rx="2" fill="#3a70b4" stroke="#bcc7d8" stroke-width="1.2"/></svg>
<svg style="left:694px;top:64px" width="25" height="25" viewBox="0 0 25 25"><path d="M1 1L19 12V18L1 19Z" fill="#4aaa78"/><path d="M4.5 5L24 14.5L4.5 24Z" fill="#4aaa78" stroke="#bcc7d8" stroke-width="1.2"/></svg>
<div class="a" style="left:0px;top:99px;width:2px;height:2px;background:#8c8c8c;"></div>
<div class="a" style="left:1px;top:101px;width:2px;height:1px;background:#d6dbe3;opacity:.6"></div>
<div class="a" style="left:0px;top:103px;width:2px;height:2px;background:#8c8c8c;"></div>
<div class="a" style="left:1px;top:105px;width:2px;height:1px;background:#d6dbe3;opacity:.6"></div>
<div class="a" style="left:0px;top:107px;width:2px;height:2px;background:#8c8c8c;"></div>
<div class="a" style="left:1px;top:109px;width:2px;height:1px;background:#d6dbe3;opacity:.6"></div>
<div class="a" style="left:0px;top:111px;width:2px;height:2px;background:#8c8c8c;"></div>
<div class="a" style="left:1px;top:113px;width:2px;height:1px;background:#d6dbe3;opacity:.6"></div>
<svg style="left:5px;top:98px" width="17" height="15" viewBox="0 0 17 15"><rect x="3" y="1" width="10" height="10" fill="#555"/><rect x="4.2" y="2.2" width="7.6" height="2.8" fill="#fff"/><rect x="4.2" y="5.9" width="7.6" height="3.8" fill="#fff"/><path d="M5.1 3.6H8.9" stroke="#666" stroke-width="0.9"/><circle cx="10.4" cy="3.6" r="0.75" fill="#e03020"/><path d="M5.1 8.6L6.3 7.2L7.5 8.6L8.7 7.2L9.9 8.6L11.1 7.2" stroke="#555" stroke-width="0.8" fill="none"/><rect x="7.1" y="11" width="1.8" height="2" fill="#3fa874"/><rect x="0" y="13" width="4.2" height="1.8" fill="#3fa874"/><rect x="5.1" y="13" width="5.8" height="1.8" fill="#6a6a6a"/><rect x="11.8" y="13" width="4.2" height="1.8" fill="#3fa874"/></svg>
<svg style="left:6px;top:162px" width="17" height="15" viewBox="0 0 17 15"><rect x="3" y="1" width="10" height="10" fill="#555"/><rect x="4.2" y="2.2" width="7.6" height="2.8" fill="#fff"/><rect x="4.2" y="5.9" width="7.6" height="3.8" fill="#fff"/><path d="M5.1 3.6H8.9" stroke="#666" stroke-width="0.9"/><circle cx="10.4" cy="3.6" r="0.75" fill="#e03020"/><path d="M5.1 8.6L6.3 7.2L7.5 8.6L8.7 7.2L9.9 8.6L11.1 7.2" stroke="#555" stroke-width="0.8" fill="none"/><rect x="7.1" y="11" width="1.8" height="2" fill="#3fa874"/><rect x="0" y="13" width="4.2" height="1.8" fill="#3fa874"/><rect x="5.1" y="13" width="5.8" height="1.8" fill="#6a6a6a"/><rect x="11.8" y="13" width="4.2" height="1.8" fill="#3fa874"/></svg>
<div class="a" style="left:0px;top:126px;width:2px;height:2px;background:#8c8c8c;"></div>
<div class="a" style="left:1px;top:128px;width:2px;height:1px;background:#d6dbe3;opacity:.6"></div>
<div class="a" style="left:0px;top:130px;width:2px;height:2px;background:#8c8c8c;"></div>
<div class="a" style="left:1px;top:132px;width:2px;height:1px;background:#d6dbe3;opacity:.6"></div>
<div class="a" style="left:0px;top:134px;width:2px;height:2px;background:#8c8c8c;"></div>
<div class="a" style="left:1px;top:136px;width:2px;height:1px;background:#d6dbe3;opacity:.6"></div>
<div class="a" style="left:0px;top:138px;width:2px;height:2px;background:#8c8c8c;"></div>
<div class="a" style="left:1px;top:140px;width:2px;height:1px;background:#d6dbe3;opacity:.6"></div>
<div class="a" style="left:0px;top:142px;width:2px;height:2px;background:#8c8c8c;"></div>
<div class="a" style="left:1px;top:144px;width:2px;height:1px;background:#d6dbe3;opacity:.6"></div>
<div class="a" style="left:0px;top:146px;width:2px;height:2px;background:#8c8c8c;"></div>
<div class="a" style="left:1px;top:148px;width:2px;height:1px;background:#d6dbe3;opacity:.6"></div>
<svg style="left:9px;top:126px" width="23" height="22" viewBox="0 0 23 22"><rect x="0" y="0" width="22.5" height="22" fill="#fff"/><path d="M1 0V21H22.5" fill="none" stroke="#000" stroke-width="2"/><path d="M2 4h1.5M2 8h1.5M2 12h1.5M2 16h1.5" stroke="#000" stroke-width="1"/><path d="M3 4H22M3 12H22M3 18H22" stroke="#999" stroke-width="0.8" stroke-dasharray="1 2"/><path d="M1 11L10.8 2.3L14.7 6.2L21.5 0.5" fill="none" stroke="#2a9a2a" stroke-width="1.2"/><path d="M1 17.5Q5 14 10.8 10.2H15.4L21.5 14.7" fill="none" stroke="#f01010" stroke-width="1.7"/></svg>
<svg style="left:40px;top:126px" width="23" height="22" viewBox="0 0 23 22"><path d="M1 0V21H22.5" fill="none" stroke="#8c939c" stroke-width="1.6"/><path d="M2 4h1.5M2 8h1.5M2 12h1.5M2 16h1.5" stroke="#8c939c" stroke-width="1"/><path d="M3 4H22M3 12H22M3 18H22" stroke="#9aa1aa" stroke-width="0.8" stroke-dasharray="1 2"/><path d="M1 11L10.8 2.3L14.7 6.2L21.5 0.5" fill="none" stroke="#98a0a9" stroke-width="1"/><path d="M1 17.5Q5 14 10.8 10.2H15.4L21.5 14.7" fill="none" stroke="#8c939c" stroke-width="1.5"/><circle cx="17" cy="16.8" r="6.3" fill="#bcc7d8"/><circle cx="17" cy="16.8" r="5.3" fill="#979ea8"/></svg>
<svg style="left:71px;top:126px" width="23" height="22" viewBox="0 0 23 22"><path d="M1 0V21H22.5" fill="none" stroke="#8c939c" stroke-width="1.6"/><path d="M2 4h1.5M2 8h1.5M2 12h1.5M2 16h1.5" stroke="#8c939c" stroke-width="1"/><path d="M3 4H22M3 12H22M3 18H22" stroke="#9aa1aa" stroke-width="0.8" stroke-dasharray="1 2"/><path d="M1 11L10.8 2.3L14.7 6.2L21.5 0.5" fill="none" stroke="#98a0a9" stroke-width="1"/><path d="M1 17.5Q5 14 10.8 10.2H15.4L21.5 14.7" fill="none" stroke="#8c939c" stroke-width="1.5"/><rect x="12.5" y="12.5" width="10" height="10" fill="#bcc7d8"/><rect x="14" y="13.7" width="8" height="8" fill="#979ea8"/></svg>
<div class="a" style="left:97px;top:121px;width:2px;height:32px;background:#cbd3e0;"></div>
<div class="a" style="left:103px;top:126px;width:2px;height:2px;background:#8c8c8c;"></div>
<div class="a" style="left:104px;top:128px;width:2px;height:1px;background:#d6dbe3;opacity:.6"></div>
<div class="a" style="left:103px;top:130px;width:2px;height:2px;background:#8c8c8c;"></div>
<div class="a" style="left:104px;top:132px;width:2px;height:1px;background:#d6dbe3;opacity:.6"></div>
<div class="a" style="left:103px;top:134px;width:2px;height:2px;background:#8c8c8c;"></div>
<div class="a" style="left:104px;top:136px;width:2px;height:1px;background:#d6dbe3;opacity:.6"></div>
<div class="a" style="left:103px;top:138px;width:2px;height:2px;background:#8c8c8c;"></div>
<div class="a" style="left:104px;top:140px;width:2px;height:1px;background:#d6dbe3;opacity:.6"></div>
<div class="a" style="left:103px;top:142px;width:2px;height:2px;background:#8c8c8c;"></div>
<div class="a" style="left:104px;top:144px;width:2px;height:1px;background:#d6dbe3;opacity:.6"></div>
<div class="a" style="left:103px;top:146px;width:2px;height:2px;background:#8c8c8c;"></div>
<div class="a" style="left:104px;top:148px;width:2px;height:1px;background:#d6dbe3;opacity:.6"></div>
<svg style="left:111px;top:125px" width="25" height="23" viewBox="0 0 25 23"><rect x="1.5" y="1.3" width="14.5" height="4" fill="#9ba5b5"/><path d="M5 5.3V19" stroke="#9ba5b5" stroke-width="1.2"/><rect x="3" y="9.7" width="4.2" height="3.8" fill="#bcc7d8" stroke="#9ba5b5" stroke-width="1.2"/><rect x="3" y="17.5" width="4.2" height="3.8" fill="#bcc7d8" stroke="#9ba5b5" stroke-width="1.2"/><path d="M7 11.6H12M7 19.4H12" stroke="#9ba5b5" stroke-width="1.2"/><rect x="12" y="9.4" width="11.8" height="4" fill="#9ba5b5"/><rect x="12" y="17.3" width="11.8" height="4" fill="#9ba5b5"/></svg>
<div class="a" style="left:140px;top:125px;width:1px;height:24px;background:#7c889b;"></div>
<svg style="left:147px;top:124px" width="26" height="25" viewBox="0 0 26 25"><path d="M1 2.5V23.5H25Z" fill="#9ba5b5"/><path d="M4 20.5V11L13.5 20.5Z" fill="#bcc7d8"/><path d="M5.5 19.5L20.5 4.5" stroke="#bcc7d8" stroke-width="6.5" stroke-linecap="round"/><path d="M6.5 18.5L19 6" stroke="#9ba5b5" stroke-width="4"/><path d="M20.3 4.7L21.8 3.2" stroke="#9ba5b5" stroke-width="4"/><path d="M3 22L4 17.5L7.5 21Z" fill="#9ba5b5"/><path d="M15 21.5V22.5M18 20.5V22.5M21 21.5V22.5" stroke="#bcc7d8" stroke-width="1"/></svg>
<svg style="left:180px;top:125px" width="23" height="24" viewBox="0 0 23 24"><path d="M8 0H22L14.5 9H19.5L3 23.5L9.5 11.5H4.5Z" fill="#9ba5b5"/></svg>
<div class="a" style="left:208px;top:125px;width:1px;height:24px;background:#7c889b;"></div>
<svg style="left:216px;top:130px" width="24" height="15" viewBox="0 0 24 15"><rect x="0.7" y="0.7" width="22.6" height="13.6" fill="#fff" stroke="#555" stroke-width="1.4"/></svg>
<div class="t" style="left:219.3px;top:132.7px;font-size:10px;letter-spacing:-0.5px;color:#111;font-weight:bold">11.5</div>
<svg style="left:247px;top:130px" width="24" height="14" viewBox="0 0 24 14"><rect x="0.7" y="0.7" width="22.6" height="12.6" fill="#fff" stroke="#555" stroke-width="1.4"/><rect x="2.2" y="3" width="14" height="7.8" fill="#48a97a"/><rect x="16.2" y="3" width="5.6" height="7.8" fill="#e3e3e3"/></svg>
<div class="t" style="left:253.6px;top:132.8px;font-size:9px;letter-spacing:-0.6px;color:#fff;font-weight:bold">12</div>
<svg style="left:283px;top:132px" width="14" height="17" viewBox="0 0 14 17"><rect x="0.7" y="0.7" width="12.6" height="15.6" fill="#fff" stroke="#555" stroke-width="1.4"/><rect x="3" y="2" width="8" height="2.8" fill="#e3e3e3"/><rect x="3" y="4.8" width="8" height="10" fill="#48a97a"/></svg>
<div class="t" style="left:286px;top:124.1px;font-size:8px;letter-spacing:-0.3px;color:#000;font-weight:bold">11</div>
<svg style="left:309px;top:133px" width="24" height="14" viewBox="0 0 24 14"><rect x="0.7" y="0.7" width="22.6" height="12.6" fill="#fff" stroke="#555" stroke-width="1.4"/><rect x="2" y="3" width="14" height="8" fill="#48a97a"/><rect x="16" y="3" width="5.8" height="8" fill="#e3e3e3"/></svg>
<div class="t" style="left:316.3px;top:125.2px;font-size:8px;letter-spacing:-0.3px;color:#000;font-weight:bold">11</div>
<svg style="left:338px;top:124px" width="28" height="24" viewBox="0 0 28 24"><path d="M14 19L2.57 10.07A14.5 14.5 0 0 1 25.43 10.07Z" fill="#fff" stroke="#5e5e5e" stroke-width="2" stroke-linejoin="round"/><path d="M13.2 15.3L18.7 9.4" stroke="#d9442a" stroke-width="1.6" stroke-linecap="round"/></svg>
<svg style="left:369px;top:124px" width="28" height="22" viewBox="0 0 28 22"><path d="M3 18A11.2 11.2 0 0 1 25.2 18Z" fill="#fff" stroke="#5e5e5e" stroke-width="2"/><path d="M13.4 14.4L18.4 8.5" stroke="#d9442a" stroke-width="1.6" stroke-linecap="round"/></svg>
<svg style="left:400px;top:123px" width="28" height="26" viewBox="0 0 28 26"><path d="M7 23.5A10.8 10.8 0 1 1 21 23.5L14 17Z" fill="#fff" stroke="#5e5e5e" stroke-width="2" stroke-linejoin="round"/><path d="M13.2 14.6L18.7 8.3" stroke="#d9442a" stroke-width="1.6" stroke-linecap="round"/></svg>
<svg style="left:431px;top:123px" width="28" height="27" viewBox="0 0 28 27"><circle cx="13.8" cy="13.8" r="10.8" fill="#fff" stroke="#5e5e5e" stroke-width="2"/><path d="M13.4 14.6L18.4 8.3" stroke="#d9442a" stroke-width="1.6" stroke-linecap="round"/></svg>
<svg style="left:469px;top:125px" width="13" height="24" viewBox="0 0 13 24"><rect x="1.2" y="1" width="10.6" height="21.8" fill="#fff" stroke="#555" stroke-width="1.5"/><path d="M3 6V13L7 9.5Z" fill="#f00000"/><path d="M7 4H10M8.5 6.5H10M8.5 9H10M8.5 11.5H10M8.5 14H10M8.5 16.5H10M7 19H10" stroke="#000" stroke-width="1"/></svg>
<svg style="left:496px;top:131px" width="23" height="12" viewBox="0 0 23 12"><rect x="0.8" y="0.8" width="21" height="10" fill="#fff" stroke="#555" stroke-width="1.5"/><path d="M10 2H17L13.5 5.5Z" fill="#f00000"/><path d="M3 6.5V9M5.5 8V9M8 7V9M10.5 8V9M13 7V9M15.5 8V9M18 6.5V9" stroke="#000" stroke-width="1"/></svg>
<svg style="left:529px;top:128px" width="18" height="18" viewBox="0 0 18 18"><defs><radialGradient id="gb" cx="0.35" cy="0.3" r="0.75"><stop offset="0" stop-color="#8fe0b8"/><stop offset="0.35" stop-color="#45b581"/><stop offset="1" stop-color="#2a8c5c"/></radialGradient></defs><circle cx="9" cy="9" r="7.6" fill="url(#gb)" stroke="#555" stroke-width="1"/></svg>
<svg style="left:559px;top:129px" width="20" height="15" viewBox="0 0 20 15"><rect x="0" y="0" width="20" height="14.3" fill="#c8c8c8"/><path d="M2 0V13.8H19.5" fill="none" stroke="#000" stroke-width="1.4"/><path d="M0.5 2h1M0.5 5h1M0.5 8h1M0.5 11h1" stroke="#000" stroke-width="1"/><path d="M3 3.2H6.3V12.3H10V9.5H12V7.5H15L16.5 8.5L17 7.5H19.5" fill="none" stroke="#00999a" stroke-width="1.2"/></svg>
<div class="a" style="left:586px;top:125px;width:1px;height:24px;background:#7c889b;"></div>
<svg style="left:593px;top:128px" width="26" height="18" viewBox="0 0 26 18"><rect x="1.8" y="1.8" width="22" height="14" rx="3" fill="#efefef" stroke="#6a6a6a" stroke-width="2"/></svg>
<svg style="left:629px;top:124px" width="16" height="26" viewBox="0 0 16 26"><path d="M7 1V13M7 19V25" stroke="#000" stroke-width="1.8"/><rect x="1" y="13" width="14" height="6" fill="#3a70b4"/><path d="M2 2H5.5M9 2H12.5M3.5 4.5H5.5M9 4.5H11M2 7.5H5.5M9 7.5H12.5M3.5 10.3H5.5M9 10.3H11M3.5 21.5H5.5M9 21.5H11M2 24.5H5.5M9 24.5H12.5" stroke="#555" stroke-width="0.9"/></svg>
<svg style="left:655px;top:129px" width="26" height="16" viewBox="0 0 26 16"><path d="M1 7.8H6.5M13 7.8H25" stroke="#000" stroke-width="2"/><rect x="7" y="1" width="6" height="13.8" fill="#3a70b4"/><path d="M1.3 2V5.5M1.3 10V13.5M4.5 3.5V5.5M4.5 10V12M15.6 2V5.5M15.6 10V13.5M18.6 3.5V5.5M18.6 10V12M21.5 2V5.5M21.5 10V13.5M24.6 2V5.5M24.6 10V13.5" stroke="#666" stroke-width="0.9"/></svg>
<svg style="left:689px;top:127px" width="20" height="20" viewBox="0 0 20 20"><circle cx="10.4" cy="9.6" r="5.6" fill="#b9b9b9" stroke="#9a9a9a" stroke-width=".6"/><path d="M6.5 6A5.5 5.5 0 0 1 14 5" stroke="#fff" stroke-width="1.2" fill="none"/><rect x="8" y="11" width="2" height="2" fill="#00e000"/><g stroke="#111" stroke-width="1"><path d="M10.40 2.60L10.40 0.80"/><path d="M15.35 4.65L16.62 3.38"/><path d="M17.40 9.60L19.20 9.60"/><path d="M15.35 14.55L16.62 15.82"/><path d="M10.40 16.60L10.40 18.40"/><path d="M5.45 14.55L4.18 15.82"/><path d="M3.40 9.60L1.60 9.60"/><path d="M5.45 4.65L4.18 3.38"/></g></svg>
<svg style="left:726px;top:127px" width="9" height="19" viewBox="0 0 9 19"><rect x="0" y="0" width="9" height="19" fill="#606060"/><rect x="1" y="1" width="7" height="7" fill="#ff0000"/><rect x="2" y="9.2" width="5" height="1.8" fill="#d8d8d8"/><rect x="2" y="12" width="5" height="1.8" fill="#d8d8d8"/><rect x="2" y="14.9" width="5" height="1.8" fill="#d8d8d8"/></svg>
<svg style="left:754px;top:128px" width="8" height="18" viewBox="0 0 8 18"><rect x="0.8" y="0.8" width="10" height="16.5" fill="#fff" stroke="#555" stroke-width="1.5"/><path d="M1.5 17V8L6 3V17Z" fill="#b8b8b8"/><path d="M1.5 1.5L5 5" stroke="#888" stroke-width=".8"/></svg>
<svg style="left:147px;top:164px" width="16" height="10" viewBox="0 0 16 10"><path d="M1 9.5A6.8 6.8 0 0 1 14.6 9.5Z" fill="#f4f4f4" stroke="#9a9a9a" stroke-width="0.9"/><path d="M5 4.2L8 7.5" stroke="#f03010" stroke-width="1.5"/><path d="M11.3 5.5L12.5 7.8" stroke="#f03010" stroke-width="1.3"/><circle cx="8.6" cy="8" r="0.9" fill="#111"/></svg>
<svg style="left:4px;top:196px" width="22" height="18" viewBox="0 0 22 18"><rect x="1" y="1" width="20" height="16" fill="#fff" stroke="#6a6a6a" stroke-width="1.5"/><path d="M1.5 1.5L11.0 10.799999999999999L20.5 1.5" fill="none" stroke="#666" stroke-width="1.6"/><path d="M2 16L8.8 9.36M20 16L13.2 9.36" stroke="#777" stroke-width="0.9"/></svg>
<svg style="left:0px;top:189px" width="16" height="16"><circle cx="7.4" cy="6.5" r="5.8" fill="#bcc7d8" opacity=".6"/><circle cx="7.4" cy="6.5" r="5.6" fill="#bcc7d8" opacity=".55"/><path d="M2.60 6.50L12.20 6.50M4.01 3.11L10.79 9.89M7.40 1.70L7.40 11.30M10.79 3.11L4.01 9.89" stroke="#f2a93b" stroke-width="1.3" stroke-linecap="round"/><circle cx="7.4" cy="6.5" r="1.3" fill="#f4e6cc"/></svg>
<svg style="left:33px;top:193px" width="22" height="18" viewBox="0 0 22 18"><rect x="1" y="1" width="20" height="16" fill="#fff" stroke="#6a6a6a" stroke-width="1.5"/><path d="M1.5 1.5L11.0 10.799999999999999L20.5 1.5" fill="none" stroke="#666" stroke-width="1.6"/><path d="M2 16L8.8 9.36M20 16L13.2 9.36" stroke="#777" stroke-width="0.9"/></svg>
<svg style="left:41px;top:199px" width="18" height="16" viewBox="0 0 18 16"><line x1="5.5" y1="11.5" x2="14.5" y2="3" stroke="#eef2f8" stroke-width="5.6" stroke-linecap="round" opacity=".75"/><path d="M2.5 14.5L4.0 10.3L6.7 13.0Z" fill="#2d6ab8"/><line x1="6.1" y1="10.9" x2="14.5" y2="3" stroke="#2d6ab8" stroke-width="3.6" stroke-linecap="round"/><line x1="11.3" y1="6.2" x2="12.3" y2="5.2" stroke="#eef2f8" stroke-width="4.5"/></svg>
<svg style="left:64px;top:189.5px" width="23" height="15" viewBox="0 0 23 15"><path d="M0.5 7L6.5 0.5H22.5V14H6.5Z" fill="#3c9e6a"/><rect x="7" y="2" width="13.5" height="10" fill="#fff"/><circle cx="4" cy="7" r="1.2" fill="#fff"/><path d="M9.5 5.3H18.5M9.5 8.3H18.5" stroke="#999" stroke-width="1"/></svg>
<svg style="left:71px;top:198px" width="18" height="17" viewBox="0 0 18 17"><line x1="6" y1="12.5" x2="15.5" y2="4" stroke="#eef2f8" stroke-width="5.6" stroke-linecap="round" opacity=".75"/><path d="M3 15.5L4.5 11.3L7.2 14.0Z" fill="#2d6ab8"/><line x1="6.6" y1="11.9" x2="15.5" y2="4" stroke="#2d6ab8" stroke-width="3.6" stroke-linecap="round"/><line x1="12.3" y1="7.2" x2="13.3" y2="6.2" stroke="#eef2f8" stroke-width="4.5"/></svg>
<svg style="left:95px;top:190px" width="25" height="25" viewBox="0 0 25 25"><rect x="0" y="0" width="5" height="15" fill="#9ba5b5"/><rect x="8" y="0" width="5" height="15" fill="#9ba5b5"/><path d="M9.5 10H13V10.5L24 17.5L10 24Z" fill="#bcc7d8"/><path d="M10 10L24 17L10 24Z" fill="#9ba5b5"/></svg>
<div class="a" style="left:124px;top:190px;width:1px;height:24px;background:#7c889b;"></div>
<div class="a" style="left:170px;top:191px;width:173px;height:22px;background:#fff;border:1px solid #7a8699"></div>
<svg style="left:175px;top:196px" width="14" height="12" viewBox="0 0 14 12"><path d="M1.5 1.5L12 11M12 1.5L1.5 11" stroke="#8a8a8a" stroke-width="2.6"/></svg>
<svg style="left:331px;top:201px" width="6" height="4" viewBox="0 0 6 4"><path d="M0 0H5.5L2.75 3Z" fill="#000"/></svg>
<svg style="left:347px;top:191px" width="27" height="24" viewBox="0 0 27 24"><path d="M1 0H24L14.5 10.5V20.5L10.5 22.5V10.5Z" fill="#9ba5b5"/><path d="M15.5 9L21 2.5V8Z" fill="#c9d1dd"/><path d="M13 21.5L23.5 10.5" stroke="#bcc7d8" stroke-width="6"/><path d="M14.5 20L22 12" stroke="#9ba5b5" stroke-width="3.4"/><path d="M12 23L13 19.5L15.5 22Z" fill="#9ba5b5"/></svg>
<svg style="left:379px;top:191px" width="26" height="25" viewBox="0 0 26 25"><path d="M1 0H23L14 10V21L9.5 23V10Z" fill="#666"/><path d="M15.5 9L20.5 2.5V12Z" fill="#fff"/><path d="M19 11.5V23M13.3 17.3H24.7" stroke="#bcc7d8" stroke-width="5.5"/><path d="M19 12.5V22M14 17.3H24" stroke="#3fa874" stroke-width="3"/></svg>
<div class="a" style="left:504px;top:16px;width:45px;height:46px;border:4px solid #f24d4d;border-radius:3px"></div>
<div class="a" style="left:602px;top:31px;width:160px;height:22px;background:#fff;border:1px solid #7a8699"></div>
<div class="t" style="left:25.5px;top:3.6px;font-size:12px;letter-spacing:-0.15px;color:#000">DM_Motor_PRJ - PCAN-Explorer * - [Receive / Transmit]</div>
<div class="t" style="left:30.5px;top:99.5px;font-size:13px;letter-spacing:-0.7px;color:#0a0a0a">File</div>
<div class="t" style="left:65.3px;top:99.5px;font-size:13px;letter-spacing:-0.18px;color:#0a0a0a">Connections</div>
<div class="t" style="left:152.8px;top:99.5px;font-size:13px;letter-spacing:-0.35px;color:#0a0a0a">Edit</div>
<div class="t" style="left:191px;top:99.5px;font-size:13px;letter-spacing:-0.13px;color:#0a0a0a">Transmit</div>
<div class="t" style="left:255.8px;top:99.5px;font-size:13px;letter-spacing:-0.19px;color:#0a0a0a">View</div>
<div class="t" style="left:299.5px;top:99.5px;font-size:13px;letter-spacing:-0.14px;color:#0a0a0a">Project</div>
<div class="t" style="left:355.4px;top:99.5px;font-size:13px;letter-spacing:0.15px;color:#0a0a0a">Macro</div>
<div class="t" style="left:409.4px;top:99.5px;font-size:13px;letter-spacing:-0.39px;color:#0a0a0a">Trace</div>
<div class="t" style="left:457.1px;top:99.5px;font-size:13px;letter-spacing:0.15px;color:#0a0a0a">Tools</div>
<div class="t" style="left:505.3px;top:99.5px;font-size:13px;letter-spacing:0.08px;color:#0a0a0a">Window</div>
<div class="t" style="left:568.6px;top:99.5px;font-size:13px;letter-spacing:-0.34px;color:#0a0a0a">Help</div>
<div class="t" style="left:554.4px;top:35.0px;font-size:13px;letter-spacing:0.1px;color:#0a0a0a">Macro:</div>
<div class="t" style="left:30.4px;top:164.5px;font-size:12px;letter-spacing:-0.15px;color:#1e1e1e">Receive / Transmit</div>
<div class="t" style="left:171.4px;top:164.5px;font-size:12px;letter-spacing:-0.05px;color:#f1f1f1">C:\...\DM_Motor_DBC\Panel-UI.ipf *</div>
<div class="t" style="left:132.6px;top:195.7px;font-size:12px;color:#1e1e1e">Filter:</div>
<div class="t" style="left:192.7px;top:195.7px;font-size:12px;letter-spacing:-0.17px">None</div>
<div class="t" style="left:27.6px;top:223.8px;font-size:12px;letter-spacing:-0.9px">Bus</div>
<div class="t" style="left:60.3px;top:223.8px;font-size:12px;letter-spacing:-0.24px">CAN-ID (hex)</div>
<div class="t" style="left:177.8px;top:223.8px;font-size:12px;letter-spacing:-0.25px">Type</div>
<div class="t" style="left:258.6px;top:223.8px;font-size:12px;letter-spacing:-0.28px">Length</div>
<div class="t" style="left:339.2px;top:223.8px;font-size:12px;letter-spacing:-0.12px">Symbol</div>
<div class="t" style="left:633.6px;top:223.8px;font-size:12px;letter-spacing:-0.69px">Data</div>
<div class="t" style="left:35px;top:242.6px;font-size:12px">-</div>
<div class="t" style="left:27.5px;top:473.6px;font-size:12px;letter-spacing:-0.9px">Bus</div>
<div class="t" style="left:60.5px;top:473.6px;font-size:12px;letter-spacing:-0.24px">CAN-ID (hex)</div>
<div class="t" style="left:165.8px;top:473.6px;font-size:12px;letter-spacing:-0.25px">Type</div>
<div class="t" style="left:235.6px;top:473.6px;font-size:12px;letter-spacing:-0.28px">Length</div>
<div class="t" style="left:305.5px;top:473.6px;font-size:12px;letter-spacing:-0.12px">Symbol</div>
<div class="t" style="left:587.6px;top:473.6px;font-size:12px;letter-spacing:-0.69px">Data</div>
<div class="t" style="left:33.8px;top:493.4px;font-size:12px">1</div>
<div class="t" style="left:56.2px;top:493.4px;font-size:12px;letter-spacing:-0.3px">201</div>
<div class="t" style="left:231px;top:493.4px;font-size:12px">8</div>
<div class="t" style="left:301px;top:493.4px;font-size:12px;letter-spacing:-0.87px">V_CTL</div>
<div class="t" style="left:161.6px;top:493.9px;font-size:11.5px;letter-spacing:-0.5px;color:#fff">FD</div>
<div class="t" style="left:33.8px;top:511.2px;font-size:12px">1</div>
<div class="t" style="left:56.2px;top:511.2px;font-size:12px;letter-spacing:-0.3px">001</div>
<div class="t" style="left:231px;top:511.2px;font-size:12px">8</div>
<div class="t" style="left:301px;top:511.2px;font-size:12px;letter-spacing:-0.57px">MIT_CTL</div>
<div class="t" style="left:161.6px;top:511.7px;font-size:11.5px;letter-spacing:-0.5px;color:#fff">FD</div>
<div class="t" style="left:601.2px;top:511.0px;font-size:12px;letter-spacing:-0.34px">p_des</div>
<div class="t" style="left:634.6px;top:511.0px;font-size:12px">=</div>
<div class="t" style="left:645px;top:511.0px;font-size:12px;letter-spacing:-0.2px">0.0</div>
<div class="t" style="left:601.2px;top:526.0px;font-size:12px;letter-spacing:-0.34px">v_des</div>
<div class="t" style="left:634.6px;top:526.0px;font-size:12px">=</div>
<div class="t" style="left:645px;top:526.0px;font-size:12px;letter-spacing:-0.2px">0.0</div>
<div class="t" style="left:601.2px;top:541.0px;font-size:12px;letter-spacing:-0.34px">Kp</div>
<div class="t" style="left:634.6px;top:541.0px;font-size:12px">=</div>
<div class="t" style="left:645px;top:541.0px;font-size:12px;letter-spacing:-0.2px">0.0</div>
<div class="t" style="left:601.2px;top:556.0px;font-size:12px;letter-spacing:-0.34px">Kd</div>
<div class="t" style="left:634.6px;top:556.0px;font-size:12px">=</div>
<div class="t" style="left:645px;top:556.0px;font-size:12px;letter-spacing:-0.2px">0.0</div>
<div class="t" style="left:601.2px;top:571.0px;font-size:12px;letter-spacing:-0.34px">t_ff</div>
<div class="t" style="left:634.6px;top:571.0px;font-size:12px">=</div>
<div class="t" style="left:645px;top:571.0px;font-size:12px;letter-spacing:-0.2px">0.0</div>
</body></html>
